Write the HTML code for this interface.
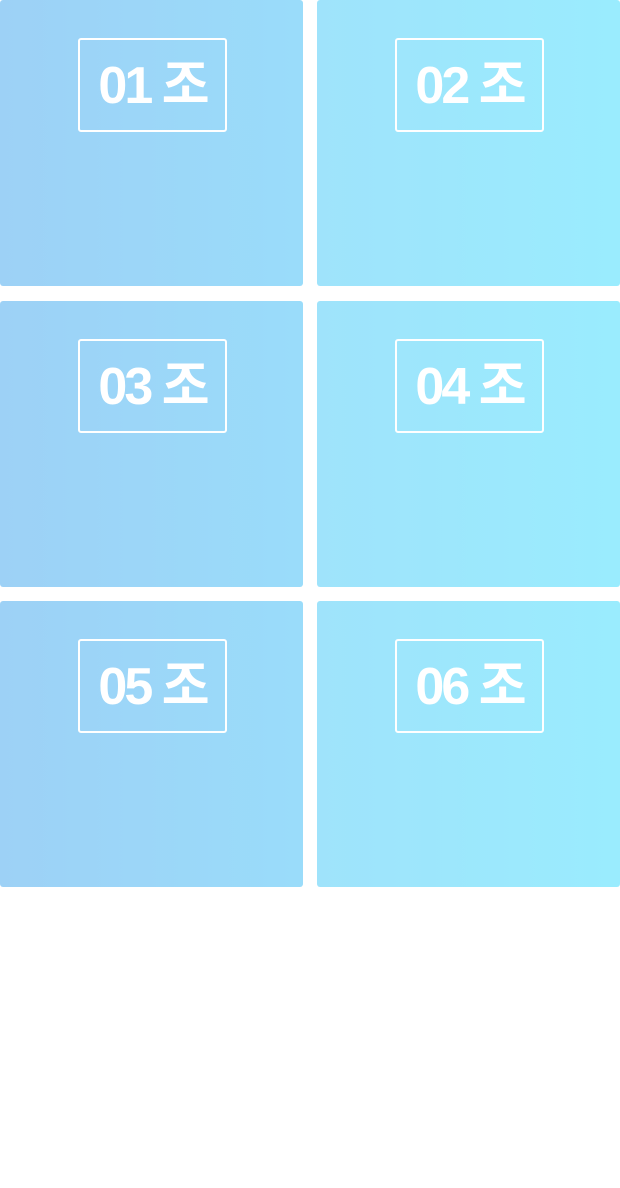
<!DOCTYPE html>
<html><head><meta charset="utf-8"><style>
html,body{margin:0;padding:0;width:620px;height:1188px;background:#fff;overflow:hidden}
.c{position:absolute;width:303px;height:286px;border-radius:3px}
.l{left:0;background:linear-gradient(90deg,#9dd1f6,#9adcfa)}
.r{left:317px;background:linear-gradient(90deg,#9fe3fb,#9aecfe)}
.b{position:absolute;left:78px;top:38px;width:145px;height:90px;border:2px solid #fff;border-radius:3px;color:#fff;
font-family:"Liberation Sans","Noto Sans CJK KR",sans-serif;font-weight:bold;font-size:52px;letter-spacing:-3px;
line-height:92px;text-align:center}
</style></head><body>
<div class="c l" style="top:0"><div class="b">01 조</div></div>
<div class="c r" style="top:0"><div class="b">02 조</div></div>
<div class="c l" style="top:301px"><div class="b">03 조</div></div>
<div class="c r" style="top:301px"><div class="b">04 조</div></div>
<div class="c l" style="top:601px"><div class="b">05 조</div></div>
<div class="c r" style="top:601px"><div class="b">06 조</div></div>
</body></html>
